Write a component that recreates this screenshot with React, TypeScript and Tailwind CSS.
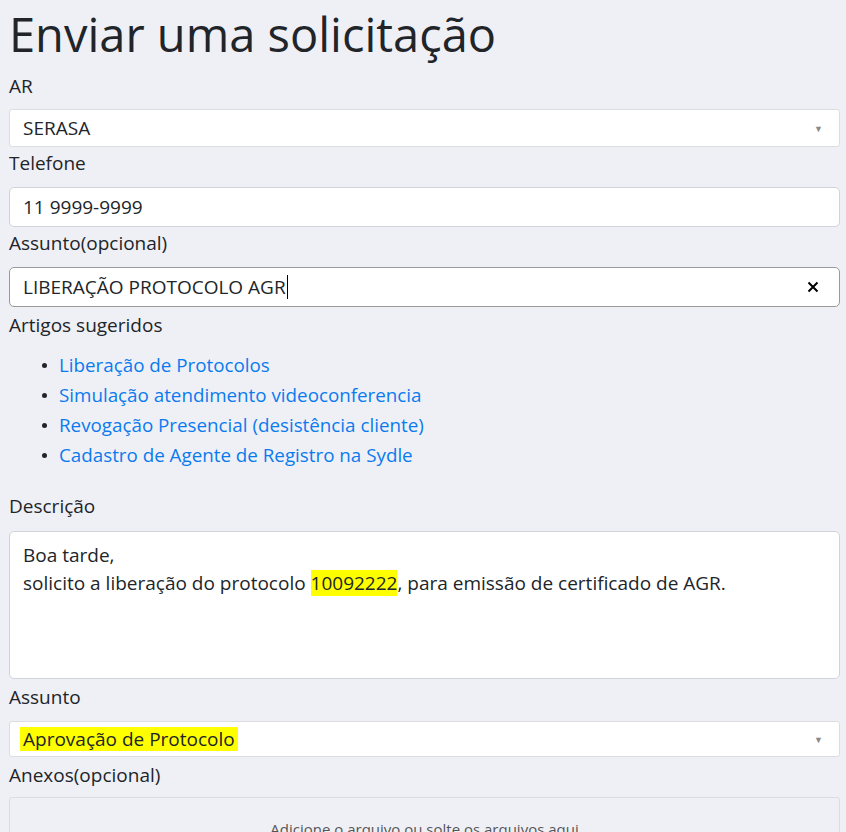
import { ReactNode } from "react";

const articles = [
  "Liberação de Protocolos",
  "Simulação atendimento videoconferencia",
  "Revogação Presencial (desistência cliente)",
  "Cadastro de Agente de Registro na Sydle",
];

function Label({ children, className = "" }: { children: ReactNode; className?: string }) {
  return <p className={`text-[19px] leading-[26px] text-[#212529] ${className}`}>{children}</p>;
}

function Caret() {
  return <span className="text-[9px] leading-none text-[#8a8a8a]">▼</span>;
}

export default function App() {
  return (
    <div
      className="min-h-screen bg-[#eff0f5] pr-[6px] pl-[9px] text-[#212529]"
      style={{ fontFamily: '"Open Sans", "Noto Sans", sans-serif' }}
    >
      <h1 className="pt-[2px] text-[47px] leading-[64px] font-normal">Enviar uma solicitação</h1>

      <Label className="mt-[7px]">AR</Label>
      <div className="mt-[10px] flex h-[38px] items-center justify-between rounded-[3px] border border-[#dcdde0] bg-white pr-[16px] pl-[13px]">
        <span className="text-[19px]">SERASA</span>
        <Caret />
      </div>

      <Label className="mt-[3px]">Telefone</Label>
      <div className="mt-[11px] flex h-[40px] items-center rounded-[5px] border border-[#ced4da] bg-white pl-[13px]">
        <span className="text-[19px]">11 9999-9999</span>
      </div>

      <Label className="mt-[3px]">Assunto(opcional)</Label>
      <div className="mt-[11px] flex h-[40px] items-center justify-between rounded-[5px] border border-[#9a9a9a] bg-white pr-[20px] pl-[13px]">
        <span className="flex items-center text-[19px]">
          LIBERAÇÃO PROTOCOLO AGR
          <span className="ml-[1px] inline-block h-[24px] w-px bg-black" />
        </span>
        <svg width="12" height="12" viewBox="0 0 12 12" className="text-black">
          <path d="M1.5 1.5 L10.5 10.5 M10.5 1.5 L1.5 10.5" stroke="currentColor" strokeWidth="2" />
        </svg>
      </div>

      <Label className="mt-[5px]">Artigos sugeridos</Label>
      <ul className="mt-[12px] pl-[33px] text-[18.8px] leading-[30px]">
        {articles.map((a) => (
          <li key={a} className="flex items-center">
            <span className="h-[5px] w-[5px] rounded-full bg-[#212529]" />
            <a href="#" className="ml-[12px] text-[#0a7bef]">
              {a}
            </a>
          </li>
        ))}
      </ul>

      <Label className="mt-[23px]">Descrição</Label>
      <div className="mt-[12px] h-[148px] rounded-[5px] border border-[#ced4da] bg-white px-[13px] pt-[9px] text-[19px] leading-[28px]">
        <p>Boa tarde,</p>
        <p>
          solicito a liberação do protocolo <span className="bg-[#ffff00]">10092222</span>, para emissão de
          certificado de AGR.
        </p>
      </div>

      <Label className="mt-[5px]">Assunto</Label>
      <div className="mt-[11px] flex h-[36px] items-center justify-between rounded-[3px] border border-[#dcdde0] bg-white pr-[16px] pl-[13px]">
        <span className="-ml-[3px] bg-[#ffff00] px-[3px] text-[19px] leading-[24px]">Aprovação de Protocolo</span>
        <Caret />
      </div>

      <Label className="mt-[5px]">Anexos(opcional)</Label>
      <div className="mt-[9px] flex h-[90px] justify-center rounded-[3px] border border-[#dcdde0] bg-[#eff0f5] pt-[20px]">
        <span className="text-[15px] text-[#555]">Adicione o arquivo ou solte os arquivos aqui</span>
      </div>
    </div>
  );
}
